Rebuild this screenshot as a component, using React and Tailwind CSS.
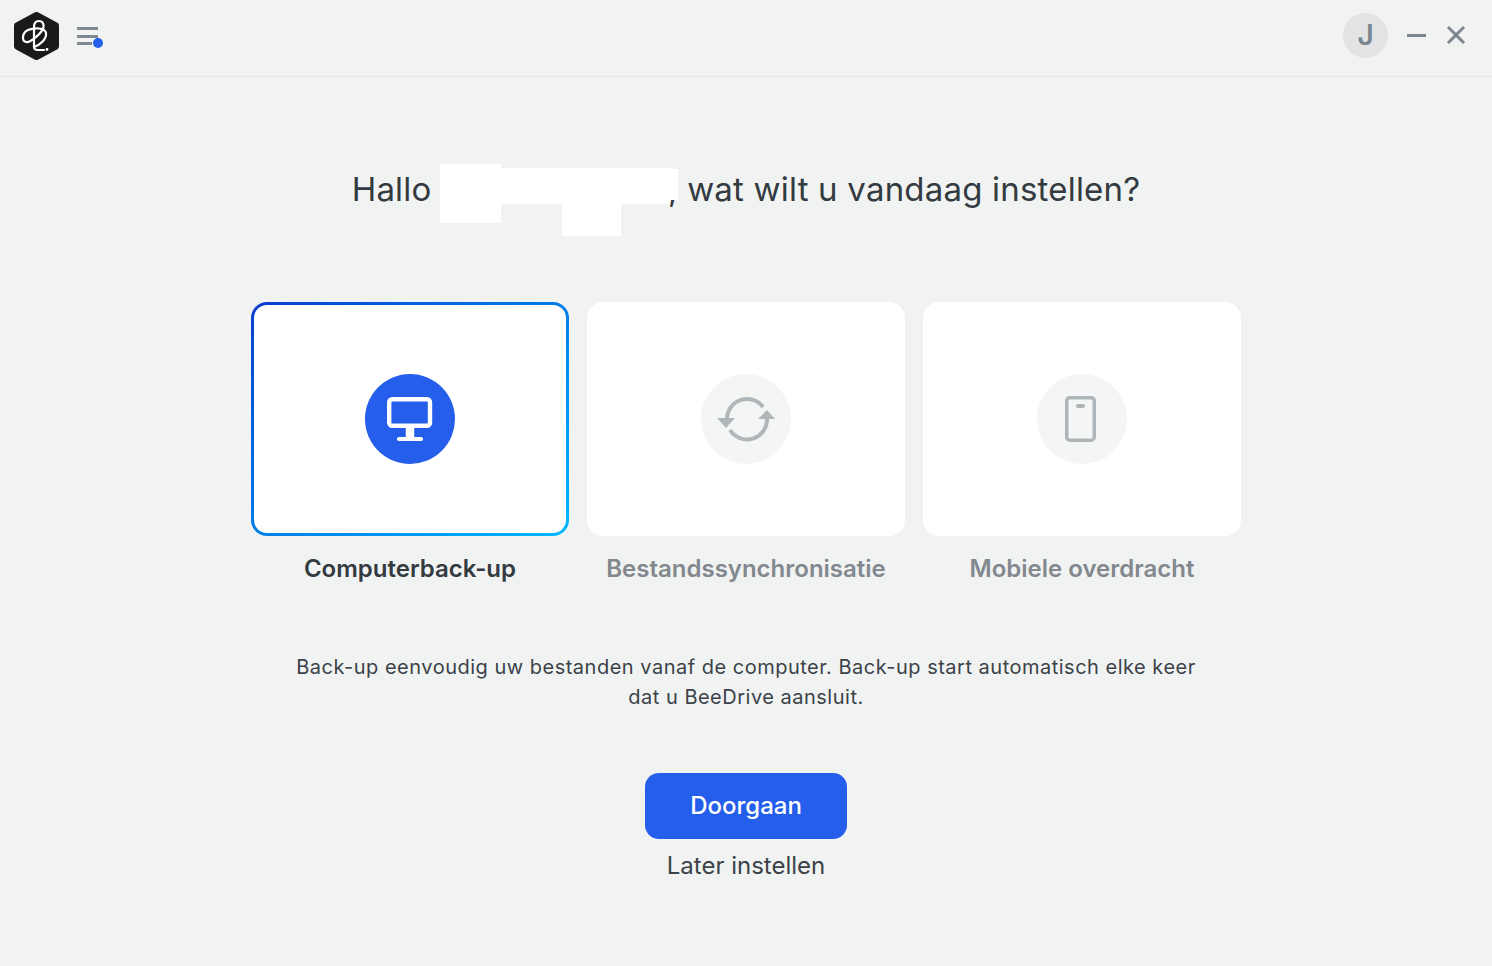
import { useState } from "react";

function Logo() {
  return (
    <svg width="45" height="48" viewBox="0 0 45 48" fill="none">
      <polygon
        points="22.5,3 42,13.500 42,34.500 22.5,45 3,34.500 3,13.500"
        fill="#1a1a1a"
        stroke="#1a1a1a"
        strokeWidth="6"
        strokeLinejoin="round"
      />
      <g stroke="#fff" strokeWidth="2.200" strokeLinecap="round" strokeLinejoin="round">
        <path d="M20 15C20 11 22 9 25 9C28 9 30 11 29.500 15C28.500 21 16 31 12 30C7.500 29 8 20.500 14 18C20 15.500 31 15.500 32 21C33 27 26 33 20 35" />
        <path d="M20 15V35C20 37 22 38 24 38H30" />
      </g>
      <circle cx="33" cy="37.500" r="1.400" fill="#fff" />
    </svg>
  );
}

function MonitorIcon() {
  return (
    <svg width="46" height="46" viewBox="0 0 46 46" fill="none" stroke="#fff" strokeLinejoin="round">
      <rect x="2.200" y="3.200" width="40.800" height="26.600" rx="3" strokeWidth="4.400" />
      <path d="M23 32v11" strokeWidth="8.500" />
      <path d="M12 43h22" strokeWidth="4.200" strokeLinecap="round" />
    </svg>
  );
}

function SyncIcon() {
  return (
    <svg width="58" height="50" viewBox="0 0 58 50" fill="none">
      <path d="M46 13A20 20 0 0 0 10 24" stroke="#b0b7ba" strokeWidth="4" />
      <path d="M0 24h18L9 34z" fill="#b0b7ba" />
      <path d="M13 36A20 20 0 0 0 50 25" stroke="#b0b7ba" strokeWidth="4" />
      <path d="M41 25L50 16L58 25z" fill="#b0b7ba" />
    </svg>
  );
}

function PhoneIcon() {
  return (
    <svg width="34" height="46" viewBox="0 0 34 46" fill="none">
      <rect x="1.750" y="1.750" width="27.500" height="42.500" rx="3" stroke="#adb5b8" strokeWidth="3.500" />
      <rect x="11" y="8" width="9" height="4" rx="2" fill="#adb5b8" />
    </svg>
  );
}

function OptionCard({ label, icon, active, onClick }) {
  return (
    <div className="w-[318px] flex flex-col items-center cursor-pointer" onClick={onClick}>
      <div
        className={
          active
            ? "w-full h-[234px] rounded-2xl p-[3px] bg-gradient-to-br from-[#0e3ccf] to-[#00b8ff]"
            : "w-full h-[234px] rounded-2xl p-[3px] bg-white"
        }
      >
        <div className="w-full h-full rounded-[13px] bg-white flex items-center justify-center">
          <div
            className={
              active
                ? "w-[90px] h-[90px] rounded-full bg-[#245eeb] flex items-center justify-center"
                : "w-[90px] h-[90px] rounded-full bg-[#f4f6f6] flex items-center justify-center"
            }
          >
            {icon}
          </div>
        </div>
      </div>
      <p
        className={
          active
            ? "mt-[18px] text-[24px] leading-[30px] font-semibold text-[#333a40]"
            : "mt-[18px] text-[24px] leading-[30px] font-semibold text-[#82888d]"
        }
      >
        {label}
      </p>
    </div>
  );
}

export default function App() {
  const [selected, setSelected] = useState(0);

  return (
    <div className="w-[1492px] h-[966px] overflow-hidden bg-[#f1f3f3] font-['Inter',sans-serif]">
      {/* Title bar */}
      <header className="h-[77px] border-b border-[#e6e8ea] flex items-center justify-between pl-[14px] pr-[26px]">
        <div className="flex items-center gap-[18px] -mt-[4px]">
          <Logo />
          <div className="relative w-[26px] h-[18px] flex flex-col justify-between">
            <span className="block w-[21px] h-[3px] bg-[#7d8a94]" />
            <span className="block w-[21px] h-[3px] bg-[#7d8a94]" />
            <span className="block w-[15px] h-[3px] bg-[#7d8a94]" />
            <span className="absolute right-0 bottom-[-3px] w-[10px] h-[10px] rounded-full bg-[#245eeb]" />
          </div>
        </div>
        <div className="flex items-center -mt-[6px]">
          <div className="w-[45px] h-[45px] rounded-full bg-[#e1e3e5] flex items-center justify-center text-[28px] font-semibold text-[#7b858d]">
            J
          </div>
          <span className="ml-[19px] block w-[19px] h-[3px] bg-[#7b858d]" />
          <svg className="ml-[20px]" width="20" height="20" viewBox="0 0 20 20" fill="none" stroke="#7b858d" strokeWidth="3">
            <path d="M2 2l16 16M18 2L2 18" />
          </svg>
        </div>
      </header>

      <main className="flex flex-col items-center">
        {/* Heading with the name blanked out */}
        <div className="relative mt-[90px] w-full flex justify-center">
          <h1 className="text-[33px] leading-[44px] font-normal tracking-[0.2px] text-[#333a40] whitespace-pre">
            Hallo <span className="inline-block w-[227px]" />, wat wilt u vandaag instellen?
          </h1>
          <div className="absolute left-[440px] top-[-3px] w-[61px] h-[59px] bg-white" />
          <div className="absolute left-[501px] top-[1px] w-[169px] h-[36px] bg-white" />
          <div className="absolute left-[670px] top-[2px] w-[8px] h-[31px] bg-white" />
          <div className="absolute left-[562px] top-[37px] w-[59px] h-[32px] bg-white" />
        </div>

        <div className="mt-[91px] flex gap-[18px]">
          <OptionCard label="Computerback-up" icon={<MonitorIcon />} active={selected === 0} onClick={() => setSelected(0)} />
          <OptionCard label="Bestandssynchronisatie" icon={<SyncIcon />} active={selected === 1} onClick={() => setSelected(1)} />
          <OptionCard label="Mobiele overdracht" icon={<PhoneIcon />} active={selected === 2} onClick={() => setSelected(2)} />
        </div>

        <p className="mt-[68px] w-[960px] text-center text-[20px] leading-[30px] tracking-[0.5px] text-[#3b4248]">
          Back-up eenvoudig uw bestanden vanaf de computer. Back-up start automatisch elke keer
          <br />
          dat u BeeDrive aansluit.
        </p>

        <button className="mt-[61px] w-[202px] h-[66px] rounded-[14px] bg-[#245eeb] text-white text-[24px] font-medium">
          Doorgaan
        </button>
        <button className="mt-[12px] text-[24px] leading-[30px] text-[#3b4248]">Later instellen</button>
      </main>
    </div>
  );
}
